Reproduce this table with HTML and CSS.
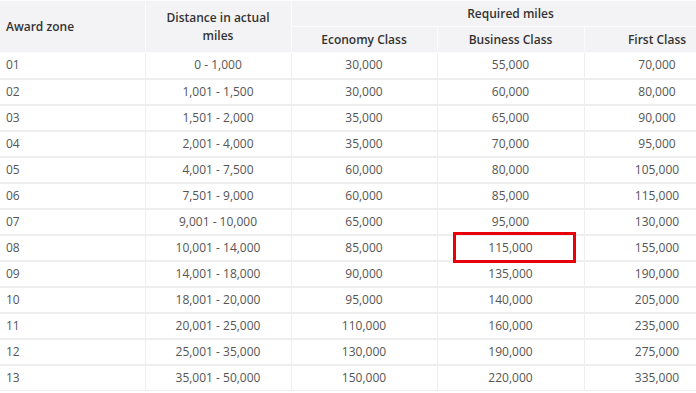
FILE: index.html
```html
<!DOCTYPE html>
<html>
<head>
<meta charset="utf-8">
<link rel="stylesheet" href="styles.css">
</head>
<body>
<div class="wrap">
<table class="miles">
  <colgroup>
    <col class="c1"><col class="c2"><col class="c3"><col class="c4"><col class="c5">
  </colgroup>
  <thead>
    <tr>
      <th rowspan="2" class="left">Award zone</th>
      <th rowspan="2">Distance in actual<br>miles</th>
      <th colspan="3">Required miles</th>
    </tr>
    <tr>
      <th>Economy Class</th>
      <th>Business Class</th>
      <th class="first">First Class</th>
    </tr>
  </thead>
  <tbody>
    <tr><td class="left">01</td><td>0 - 1,000</td><td>30,000</td><td>55,000</td><td>70,000</td></tr>
    <tr><td class="left">02</td><td>1,001 - 1,500</td><td>30,000</td><td>60,000</td><td>80,000</td></tr>
    <tr><td class="left">03</td><td>1,501 - 2,000</td><td>35,000</td><td>65,000</td><td>90,000</td></tr>
    <tr><td class="left">04</td><td>2,001 - 4,000</td><td>35,000</td><td>70,000</td><td>95,000</td></tr>
    <tr><td class="left">05</td><td>4,001 - 7,500</td><td>60,000</td><td>80,000</td><td>105,000</td></tr>
    <tr><td class="left">06</td><td>7,501 - 9,000</td><td>60,000</td><td>85,000</td><td>115,000</td></tr>
    <tr><td class="left">07</td><td>9,001 - 10,000</td><td>65,000</td><td>95,000</td><td>130,000</td></tr>
    <tr><td class="left">08</td><td>10,001 - 14,000</td><td>85,000</td><td class="hl">115,000<span class="mark"></span></td><td>155,000</td></tr>
    <tr><td class="left">09</td><td>14,001 - 18,000</td><td>90,000</td><td>135,000</td><td>190,000</td></tr>
    <tr><td class="left">10</td><td>18,001 - 20,000</td><td>95,000</td><td>140,000</td><td>205,000</td></tr>
    <tr><td class="left">11</td><td>20,001 - 25,000</td><td>110,000</td><td>160,000</td><td>235,000</td></tr>
    <tr><td class="left">12</td><td>25,001 - 35,000</td><td>130,000</td><td>190,000</td><td>275,000</td></tr>
    <tr><td class="left">13</td><td>35,001 - 50,000</td><td>150,000</td><td>220,000</td><td>335,000</td></tr>
  </tbody>
</table>
</div>
</body>
</html>
```
FILE: styles.css
```css
html, body {
  margin: 0;
  padding: 0;
  background: #ffffff;
  overflow: hidden;
}
.wrap {
  width: 696px;
  overflow: hidden;
}
.miles {
  width: 730px;
  table-layout: fixed;
  border-collapse: collapse;
  font-family: "Open Sans", "Liberation Sans", sans-serif;
  font-size: 12px;
  color: #555555;
}
.c1 { width: 145px; }
.c2 { width: 146px; }
.c3 { width: 146px; }
.c4 { width: 147px; }
.c5 { width: 146px; }
.miles tr { height: 26px; }
.miles th {
  background: #f3f3f5;
  color: #333333;
  font-weight: 600;
  padding: 0 6px;
  text-align: center;
  border: 1px solid #fbfbfb;
  line-height: 18px;
}
.miles td {
  padding: 0 6px;
  text-align: center;
  border: 1px solid #eeeeee;
  border-top-width: 2px;
  line-height: 16px;
}
.miles tbody tr:first-child td { border-top-width: 1px; }
.miles .left { text-align: left; }
.miles td:first-child, .miles th:first-child { border-left: none; }
.hl { position: relative; }
.mark {
  position: absolute;
  left: 15px;
  right: 8px;
  top: -4px;
  bottom: -3px;
  border: 3px solid #e8000b;
}
```
